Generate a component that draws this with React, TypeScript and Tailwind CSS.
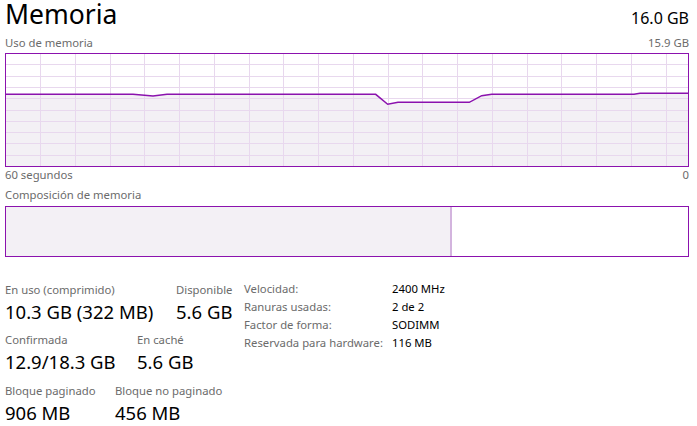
// Memoria panel (Task Manager style)
const purple = "#8b12ae";

const linePts: [number, number][] = [
  [0, 40.3],
  [127, 40.3],
  [147, 42],
  [161, 40.3],
  [369.7, 40.3],
  [381.7, 50.3],
  [392, 48.3],
  [463.3, 48.3],
  [475.7, 41.7],
  [485.7, 40.3],
  [628, 40.3],
  [634, 39.3],
  [682, 39.3],
];

const UsageGraph = () => {
  const pts = linePts.map(([x, y]) => `${x},${y}`).join(" ");
  const vlines = Array.from({ length: 19 }, (_, k) => Math.round(34 + k * 34.76) + 0.5);
  const hlines = Array.from({ length: 9 }, (_, k) => Math.round(10.3 + 11.3 * k) + 0.5);
  return (
    <svg width="682" height="112" className="block">
      <polygon points={`${pts} 682,112 0,112`} fill="#f3f0f5" />
      {vlines.map((x) => (
        <line key={`v${x}`} x1={x} x2={x} y1={0} y2={112} stroke="#e8d8ee" strokeWidth={1} />
      ))}
      {hlines.map((y) => (
        <line key={`h${y}`} x1={0} x2={682} y1={y} y2={y} stroke="#e8d8ee" strokeWidth={1} />
      ))}
      <polyline points={pts} fill="none" stroke={purple} strokeWidth={1.5} />
    </svg>
  );
};

const Stat = ({ label, value, className = "" }: { label: string; value: string; className?: string }) => (
  <div className={`flex flex-col ${className}`}>
    <div className="text-[11.3px] leading-[14px] text-[#6b6b6b]">{label}</div>
    <div className="mt-[4px] text-[18.5px] leading-[22px] text-black">{value}</div>
  </div>
);

const specs = [
  ["Velocidad:", "2400 MHz"],
  ["Ranuras usadas:", "2 de 2"],
  ["Factor de forma:", "SODIMM"],
  ["Reservada para hardware:", "116 MB"],
];

export default function App() {
  return (
    <div className="w-[697px] h-[426px] bg-white pl-[5px] pr-[8px] font-['Noto_Sans',sans-serif]">
      <div className="flex items-baseline justify-between h-[28px]">
        <div className="text-[26.5px] leading-[29px] text-black">Memoria</div>
        <div className="text-[16px] leading-[20px] text-black">16.0 GB</div>
      </div>
      <div className="flex justify-between h-[25px] pt-[8px] text-[11.3px] leading-[14px] text-[#6b6b6b]">
        <span>Uso de memoria</span>
        <span>15.9 GB</span>
      </div>
      <div className="h-[114px] border border-[#8b12ae]">
        <UsageGraph />
      </div>
      <div className="flex justify-between mt-[1px] h-[14px] text-[11.3px] leading-[14px] text-[#6b6b6b]">
        <span>60 segundos</span>
        <span>0</span>
      </div>
      <div className="mt-[6px] h-[14px] text-[11.3px] leading-[14px] text-[#6b6b6b]">Composición de memoria</div>
      <div className="mt-[4px] h-[51px] border border-[#8b12ae] flex">
        <div className="w-[444px] bg-[#f3f0f5]" />
        <div className="w-[2px] bg-[#d3b4de]" />
        <div className="flex-1 bg-white" />
      </div>
      <div className="mt-[23px] flex">
        <div className="w-[239px] pt-[3px] flex flex-col gap-[10px]">
          <div className="flex">
            <Stat className="w-[171px]" label="En uso (comprimido)" value="10.3 GB (322 MB)" />
            <Stat label="Disponible" value="5.6 GB" />
          </div>
          <div className="flex">
            <Stat className="w-[132px]" label="Confirmada" value="12.9/18.3 GB" />
            <Stat label="En caché" value="5.6 GB" />
          </div>
          <div className="flex mt-[1px]">
            <Stat className="w-[110px]" label="Bloque paginado" value="906 MB" />
            <Stat label="Bloque no paginado" value="456 MB" />
          </div>
        </div>
        <div className="flex flex-col text-[11.3px] leading-[18px]">
          {specs.map(([k, v]) => (
            <div key={k} className="flex">
              <span className="w-[148px] text-[#6b6b6b]">{k}</span>
              <span className="text-black">{v}</span>
            </div>
          ))}
        </div>
      </div>
    </div>
  );
}
